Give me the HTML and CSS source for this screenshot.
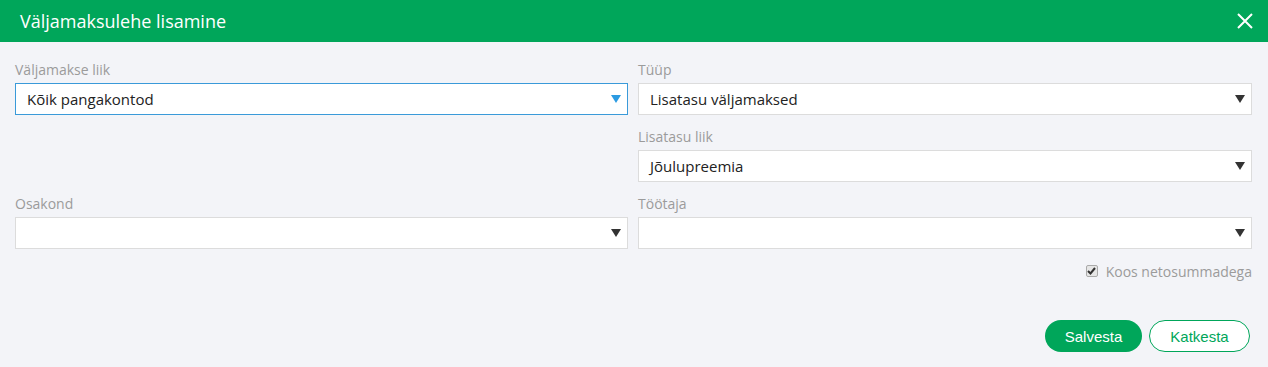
FILE: index.html
```html
<!DOCTYPE html>
<html lang="et">
<head>
    <meta charset="UTF-8">
    <title>Väljamaksulehe lisamine</title>
    <link rel="stylesheet" href="styles.css">
</head>
<body>
    <div class="modal">
        <!-- Header -->
        <div class="modal-header">
            <h1>Väljamaksulehe lisamine</h1>
            <svg class="close" width="16" height="16" viewBox="0 0 16 16">
                <path d="M1 1 L15 15 M15 1 L1 15" stroke="#fff" stroke-width="2" fill="none"/>
            </svg>
        </div>

        <!-- Form -->
        <div class="modal-body">
            <div class="form-grid">
                <div class="form-group">
                    <label>Väljamakse liik</label>
                    <div class="select focused">
                        <span>Kõik pangakontod</span>
                        <svg class="arrow" width="10" height="8" viewBox="0 0 10 8"><path d="M0 0 H10 L5 8 Z" fill="#2b9be2"/></svg>
                    </div>
                </div>
                <div class="form-group">
                    <label>Tüüp</label>
                    <div class="select">
                        <span>Lisatasu väljamaksed</span>
                        <svg class="arrow" width="10" height="8" viewBox="0 0 10 8"><path d="M0 0 H10 L5 8 Z" fill="#333"/></svg>
                    </div>
                </div>
                <div class="form-group empty"></div>
                <div class="form-group">
                    <label>Lisatasu liik</label>
                    <div class="select">
                        <span>Jõulupreemia</span>
                        <svg class="arrow" width="10" height="8" viewBox="0 0 10 8"><path d="M0 0 H10 L5 8 Z" fill="#333"/></svg>
                    </div>
                </div>
                <div class="form-group">
                    <label>Osakond</label>
                    <div class="select">
                        <span></span>
                        <svg class="arrow" width="10" height="8" viewBox="0 0 10 8"><path d="M0 0 H10 L5 8 Z" fill="#333"/></svg>
                    </div>
                </div>
                <div class="form-group">
                    <label>Töötaja</label>
                    <div class="select">
                        <span></span>
                        <svg class="arrow" width="10" height="8" viewBox="0 0 10 8"><path d="M0 0 H10 L5 8 Z" fill="#333"/></svg>
                    </div>
                </div>
            </div>

            <div class="check-row">
                <span class="checkbox">
                    <svg width="9" height="8" viewBox="0 0 9 8"><path d="M1 4 L3.5 6.5 L8 1" stroke="#333" stroke-width="2" fill="none"/></svg>
                </span>
                <span class="check-label">Koos netosummadega</span>
            </div>

            <div class="actions">
                <button class="btn btn-primary">Salvesta</button>
                <button class="btn btn-outline">Katkesta</button>
            </div>
        </div>
    </div>
</body>
</html>
```

FILE: styles.css
```css
* {
    margin: 0;
    padding: 0;
    box-sizing: border-box;
}

body {
    font-family: 'Open Sans', sans-serif;
    background: #f3f4f8;
    color: #333;
    width: 1268px;
    height: 367px;
    overflow: hidden;
}

/* Header */
.modal-header {
    height: 42px;
    background: #00a65a;
    display: flex;
    align-items: center;
    justify-content: space-between;
    padding: 0 15px 0 20px;
}

h1 {
    font-size: 18px;
    font-weight: 400;
    color: white;
}

.close {
    display: block;
}

/* Body */
.modal-body {
    padding: 18px 16px 0 15px;
}

.form-grid {
    display: grid;
    grid-template-columns: 613px 614px;
    column-gap: 10px;
    row-gap: 12px;
}

.form-group.empty {
    height: 55px;
}

label {
    display: block;
    font-size: 14px;
    line-height: 20px;
    color: #9b9b9b;
    margin-bottom: 3px;
}

.select {
    height: 32px;
    background: white;
    border: 1px solid #dcdcdc;
    display: flex;
    align-items: center;
    justify-content: space-between;
    padding: 0 6px 0 11px;
    font-size: 15px;
    color: #222;
}

.select.focused {
    border-color: #3a9ad9;
}

.arrow {
    display: block;
}

/* Checkbox */
.check-row {
    display: flex;
    justify-content: flex-end;
    align-items: center;
    gap: 8px;
    margin-top: 12px;
    height: 20px;
}

.checkbox {
    width: 12px;
    height: 12px;
    border: 1px solid #aaa;
    border-radius: 2px;
    background: #e6e6e6;
    display: flex;
    align-items: center;
    justify-content: center;
}

.check-label {
    font-size: 14px;
    color: #9b9b9b;
}

/* Buttons */
.actions {
    display: flex;
    justify-content: flex-end;
    gap: 7px;
    margin-top: 39px;
    padding-right: 2px;
}

.btn {
    height: 32px;
    border-radius: 16px;
    font-family: 'Liberation Sans', Arial, sans-serif;
    font-size: 15px;
    cursor: pointer;
}

.btn-primary {
    width: 97px;
    background: #00a65a;
    color: white;
    border: none;
}

.btn-outline {
    width: 101px;
    background: white;
    color: #00a65a;
    border: 1px solid #00a65a;
}
```
